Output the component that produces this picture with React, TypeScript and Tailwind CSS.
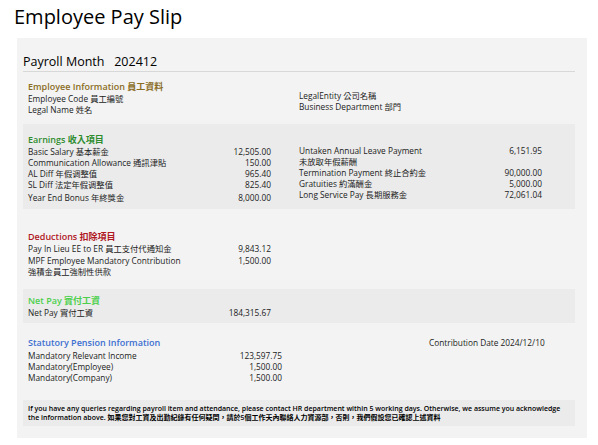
const font = { fontFamily: '"Open Sans", "Noto Sans CJK TC", sans-serif' };

function Row({ label, value, w = "w-[243px]", lw = "w-[180px]" }: { label: string; value: string; w?: string; lw?: string }) {
  return (
    <div className={`flex ${w} items-start justify-between`}>
      <div className={`${lw} pr-1`}>{label}</div>
      <div className="text-right">{value}</div>
    </div>
  );
}

export default function App() {
  return (
    <div className="w-[598px] h-[445px] bg-white text-[#222]" style={font}>
      <h1 className="pl-[14px] pt-[4px] text-[20px] leading-[26px] text-black">Employee Pay Slip</h1>
      <div className="ml-[17px] mt-[8px] w-[570px] h-[400px] bg-[#f3f3f3] px-[6px] pt-[15px] text-[8.3px] leading-[11px]">
        <div className="w-[552px] border-b border-[#d8d8d8] text-[12.5px] leading-[17px] text-black pb-[1px]">
          Payroll Month&nbsp;&nbsp;&nbsp;202412
        </div>
        <div className="px-[5px] pt-[9px]">
          <div className="text-[9px] leading-[12px] font-semibold text-[#8a6d1f]">Employee Information 員工資料</div>
          <div className="grid grid-cols-[271px_1fr]">
            <div>Employee Code 員工編號<br />Legal Name 姓名</div>
            <div className="-mt-[3px]">LegalEntity 公司名稱<br />Business Department 部門</div>
          </div>
        </div>
        <div className="mt-[9px] w-[552px] bg-[#ebebeb] px-[5px] pt-[10px] pb-[6px]">
          <div className="text-[9px] leading-[12px] font-semibold text-[#2e8b2e]">Earnings 收入項目</div>
          <div className="grid grid-cols-[271px_1fr]">
            <div>
              <Row label="Basic Salary 基本薪金" value="12,505.00" />
              <Row label="Communication Allowance 通訊津貼" value="150.00" />
              <Row label="AL Diff 年假调整值" value="965.40" />
              <Row label="SL Diff 法定年假调整值" value="825.40" />
              <div className="mt-[2px]"><Row label="Year End Bonus 年終獎金" value="8,000.00" /></div>
            </div>
            <div className="-mt-[1px]">
              <Row lw="w-[135px]" label="Untaken Annual Leave Payment 未放取年假薪酬" value="6,151.95" />
              <Row lw="w-[170px]" label="Termination Payment 終止合約金" value="90,000.00" />
              <Row lw="w-[170px]" label="Gratuities 約滿酬金" value="5,000.00" />
              <Row lw="w-[170px]" label="Long Service Pay 長期服務金" value="72,061.04" />
            </div>
          </div>
        </div>
        <div className="px-[5px] pt-[22px] pb-[12px]">
          <div className="text-[9px] leading-[12px] font-semibold text-[#b0171f]">Deductions 扣除項目</div>
          <Row lw="w-[165px]" label="Pay In Lieu EE to ER 員工支付代通知金" value="9,843.12" />
          <div className="mt-[1px]"><Row lw="w-[165px]" label="MPF Employee Mandatory Contribution 強積金員工強制性供款" value="1,500.00" /></div>
        </div>
        <div className="w-[552px] bg-[#ebebeb] px-[5px] pt-[6px] pb-[5px]">
          <div className="text-[9px] leading-[12px] font-semibold text-[#4cd04c]">Net Pay 實付工資</div>
          <Row label="Net Pay 實付工資" value="184,315.67" />
        </div>
        <div className="px-[5px] pt-[13px] pb-[17px]">
          <div className="grid grid-cols-[401px_1fr]">
            <div>
              <div className="text-[9px] leading-[13px] font-semibold text-[#3c6fd1]">Statutory Pension Information</div>
              <div className="pt-[1px]">
                <Row w="w-[254px]" label="Mandatory  Relevant  Income" value="123,597.75" />
                <Row w="w-[254px]" label="Mandatory(Employee)" value="1,500.00" />
                <Row w="w-[254px]" label="Mandatory(Company)" value="1,500.00" />
              </div>
            </div>
            <div className="pt-[1px]">Contribution Date 2024/12/10</div>
          </div>
        </div>
        <div className="w-[552px] bg-[#ebebeb] px-[5px] py-[4px] text-[7px] leading-[9px] font-semibold text-black">
          If you have any queries regarding payroll item and attendance, please contact HR department within 5 working days. Otherwise, we assume you acknowledge the information above. 如果您對工資及出勤紀錄有任何疑問，請於5個工作天內聯絡人力資源部，否則，我們假設您已確認上述資料
        </div>
      </div>
    </div>
  );
}
